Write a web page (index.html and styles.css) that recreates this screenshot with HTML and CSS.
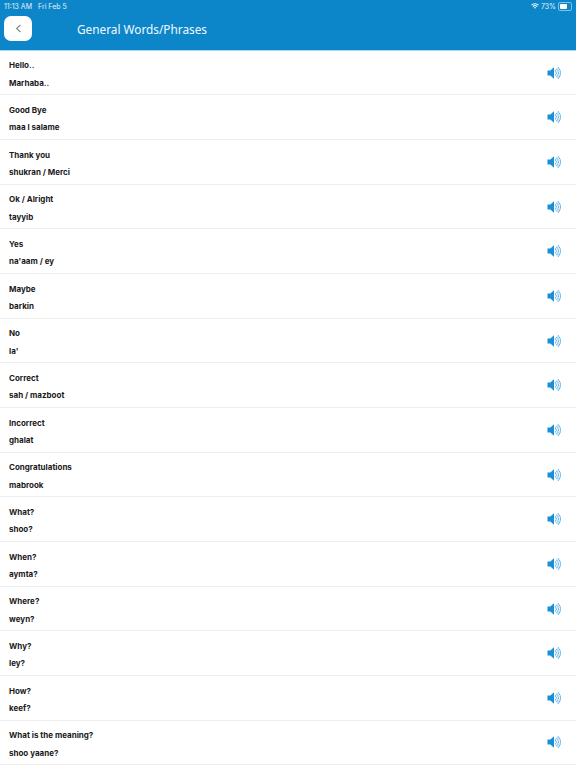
FILE: index.html
```html
<!DOCTYPE html>
<html lang="en">
<head>
  <meta charset="UTF-8">
  <title>General Words/Phrases</title>
  <link rel="stylesheet" href="styles.css">
</head>
<body>
  <svg class="defs" width="0" height="0">
    <symbol id="speaker" viewBox="0 0 14 14">
      <path d="M0.5 4.4h2.8L7 1.2v11.6L3.3 9.6H0.5z" fill="#1a8fd6"/>
      <path d="M8 4.6a3 3 0 0 1 0 4.8M9.4 3a5 5 0 0 1 0 8M10.8 1.5a7 7 0 0 1 0 11" fill="none" stroke="#55aee6" stroke-width="1.2" stroke-dasharray="1.4 .5"/>
    </symbol>
  </svg>

  <header class="topbar">
    <div class="status">
      <span class="status-time">11:13 AM</span>
      <span class="status-date">Fri Feb 5</span>
      <span class="status-right">
        <svg class="wifi" viewBox="0 0 12 9" width="8" height="6">
          <path d="M6 8.6 4.4 6.9a2.3 2.3 0 0 1 3.2 0zM3.4 5.9 2.3 4.8a5.3 5.3 0 0 1 7.4 0L8.6 5.9a3.8 3.8 0 0 0-5.2 0zM1.3 3.8.2 2.7a8.2 8.2 0 0 1 11.6 0L10.7 3.8a6.7 6.7 0 0 0-9.4 0z" fill="#fff"/>
        </svg>
        <span>73%</span>
        <span class="battery"><span class="battery-fill"></span></span>
      </span>
    </div>
    <div class="navbar">
      <button class="back">
        <svg viewBox="0 0 8 10" width="7" height="9"><path d="M6.2 1 1.8 5l4.4 4" fill="none" stroke="#8a8a8a" stroke-width="1.3"/></svg>
      </button>
      <h1>General Words/Phrases</h1>
    </div>
  </header>

  <ul class="phrases">
    <li><div class="words"><p>Hello..</p><p>Marhaba..</p></div><svg class="speak"><use href="#speaker"/></svg></li>
    <li><div class="words"><p>Good Bye</p><p>maa l salame</p></div><svg class="speak"><use href="#speaker"/></svg></li>
    <li><div class="words"><p>Thank you</p><p>shukran / Merci</p></div><svg class="speak"><use href="#speaker"/></svg></li>
    <li><div class="words"><p>Ok / Alright</p><p>tayyib</p></div><svg class="speak"><use href="#speaker"/></svg></li>
    <li><div class="words"><p>Yes</p><p>na'aam / ey</p></div><svg class="speak"><use href="#speaker"/></svg></li>
    <li><div class="words"><p>Maybe</p><p>barkin</p></div><svg class="speak"><use href="#speaker"/></svg></li>
    <li><div class="words"><p>No</p><p>la'</p></div><svg class="speak"><use href="#speaker"/></svg></li>
    <li><div class="words"><p>Correct</p><p>sah / mazboot</p></div><svg class="speak"><use href="#speaker"/></svg></li>
    <li><div class="words"><p>Incorrect</p><p>ghalat</p></div><svg class="speak"><use href="#speaker"/></svg></li>
    <li><div class="words"><p>Congratulations</p><p>mabrook</p></div><svg class="speak"><use href="#speaker"/></svg></li>
    <li><div class="words"><p>What?</p><p>shoo?</p></div><svg class="speak"><use href="#speaker"/></svg></li>
    <li><div class="words"><p>When?</p><p>aymta?</p></div><svg class="speak"><use href="#speaker"/></svg></li>
    <li><div class="words"><p>Where?</p><p>weyn?</p></div><svg class="speak"><use href="#speaker"/></svg></li>
    <li><div class="words"><p>Why?</p><p>ley?</p></div><svg class="speak"><use href="#speaker"/></svg></li>
    <li><div class="words"><p>How?</p><p>keef?</p></div><svg class="speak"><use href="#speaker"/></svg></li>
    <li><div class="words"><p>What is the meaning?</p><p>shoo yaane?</p></div><svg class="speak"><use href="#speaker"/></svg></li>
  </ul>
</body>
</html>
```

FILE: styles.css
```css
body {
  margin: 0;
  height: 768px;
  overflow: hidden;
  background-color: #ffffff;
  font-family: Inter, "Liberation Sans", sans-serif;
}

.defs {
  display: block;
  height: 0;
}

.topbar {
  height: 50.8px;
  box-sizing: border-box;
  background-color: #0d86c9;
  border-bottom: 1px solid #a8d8f2;
  color: white;
}

.status {
  display: flex;
  align-items: center;
  height: 12px;
  padding: 0 4px;
  font-size: 7px;
  color: #e4f2fa;
}

.status-date {
  margin-left: 6px;
}

.status-right {
  margin-left: auto;
  display: flex;
  align-items: center;
  gap: 2px;
}

.battery {
  display: block;
  width: 10px;
  height: 5px;
  padding: 1px;
  border: 1px solid #7fc0e6;
  border-radius: 2px;
}

.battery-fill {
  display: block;
  width: 73%;
  height: 100%;
  background-color: white;
  border-radius: 1px;
}

.navbar {
  display: flex;
  align-items: center;
  height: 33px;
  padding-left: 4px;
}

.back {
  display: flex;
  align-items: center;
  justify-content: center;
  width: 28px;
  height: 25px;
  padding: 0;
  border: none;
  border-radius: 7px;
  background-color: white;
}

h1 {
  margin: 0 0 0 45px;
  font-family: "Noto Sans", sans-serif;
  font-size: 11.8px;
  font-weight: 400;
  color: #f2f9fd;
}

.phrases {
  list-style: none;
  margin: 0;
  padding: 0;
}

.phrases li {
  display: flex;
  align-items: center;
  justify-content: space-between;
  box-sizing: border-box;
  height: 44.67px;
  padding: 0 15px 0 9px;
  border-bottom: 1px solid #eeeeee;
}

.words {
  padding-top: 4.4px;
}

.phrases p {
  margin: 0;
  font-size: 8px;
  font-weight: 700;
  line-height: 17.5px;
  color: #1a1a1a;
}

.speak {
  width: 14px;
  height: 14px;
}
```
